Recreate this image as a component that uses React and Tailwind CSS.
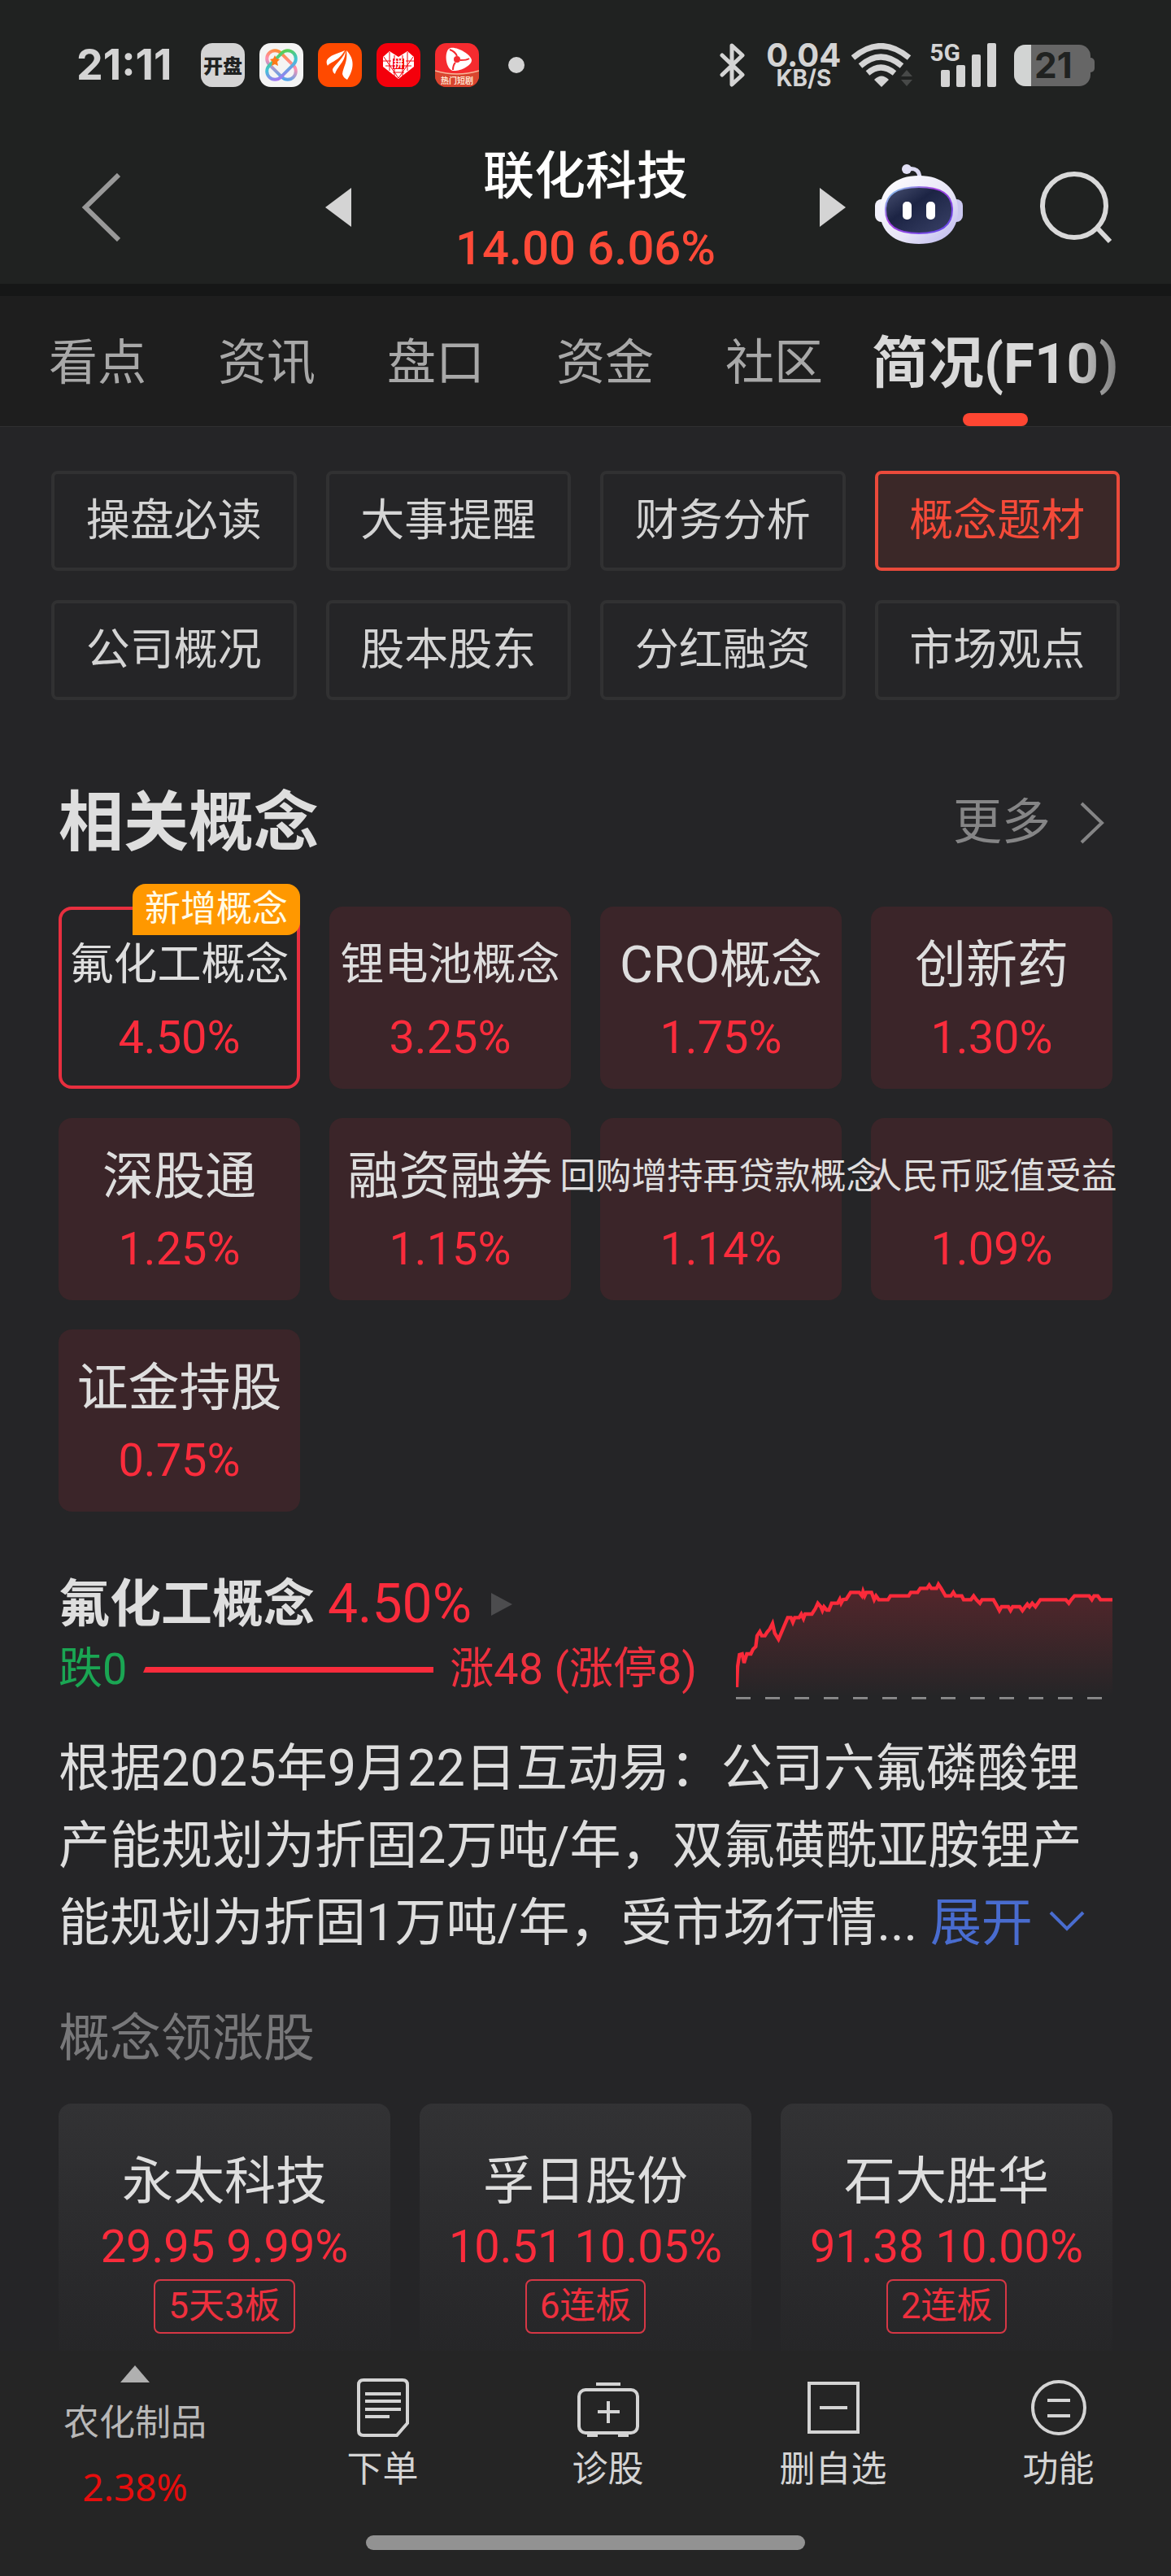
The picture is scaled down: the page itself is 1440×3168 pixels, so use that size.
import React, { useState } from 'react';

const tabs = ['看点', '资讯', '盘口', '资金', '社区'];

const sections = ['操盘必读', '大事提醒', '财务分析', '概念题材', '公司概况', '股本股东', '分红融资', '市场观点'];

const concepts = [
    { name: '氟化工概念', change: '4.50%', isNew: true },
    { name: '锂电池概念', change: '3.25%' },
    { name: 'CRO概念', change: '1.75%' },
    { name: '创新药', change: '1.30%' },
    { name: '深股通', change: '1.25%' },
    { name: '融资融券', change: '1.15%' },
    { name: '回购增持再贷款概念', change: '1.14%' },
    { name: '人民币贬值受益', change: '1.09%' },
    { name: '证金持股', change: '0.75%' },
];

const leaders = [
    { name: '永太科技', price: '29.95', change: '9.99%', tag: '5天3板' },
    { name: '孚日股份', price: '10.51', change: '10.05%', tag: '6连板' },
    { name: '石大胜华', price: '91.38', change: '10.00%', tag: '2连板' },
];

const trend =
    '78,525 81,450 88,405 98,402 105,435 115,402 130,402 138,385 148,375 153,335 163,320 170,335 182,335 190,322 200,310 210,290 218,325 232,348 266,268 278,268 285,285 292,268 308,268 316,255 324,272 330,255 355,255 368,235 377,215 388,228 394,242 400,228 410,240 418,240 428,215 450,215 458,200 463,215 470,202 482,200 498,175 530,175 540,188 544,172 550,188 556,175 575,175 585,202 592,188 602,202 636,202 645,188 712,188 720,175 745,175 755,160 780,160 788,148 796,160 815,160 822,145 832,160 848,188 868,188 877,175 885,188 908,188 915,202 942,202 952,188 962,202 975,215 983,202 1025,202 1038,225 1047,242 1055,228 1080,228 1088,242 1096,228 1122,228 1132,242 1142,228 1150,218 1158,228 1168,215 1180,228 1198,202 1292,202 1303,215 1312,202 1324,188 1378,188 1388,202 1396,188 1410,188 1420,202 1464,202';

// Longer names get a smaller size
const nameSize = (name) => {
    if (name.length > 5) return 'text-[44px]';
    if (name.length === 5 && !name.startsWith('CRO')) return 'text-[54px]';
    return 'text-[63px]';
};

const StatusBar = () => (
    <div className="flex h-40 items-center justify-between pl-[94px] pr-[94px] font-['Inter',sans-serif] text-[#d4d4d4]">
        <div className="flex items-center">
            <span className="w-[153px] text-[52px] font-bold leading-none">21:11</span>
            <div className="flex items-center gap-[18px]">
                <span className="flex h-[54px] w-[54px] items-center justify-center rounded-[14px] bg-[#d4d4d4] font-['Noto_Sans_CJK_SC',sans-serif] text-[24px] font-black leading-none text-[#202221]">
                    开盘
                </span>
                <svg viewBox="0 0 54 54" className="h-[54px] w-[54px]">
                    <defs>
                        <linearGradient id="knotA" x1="0" y1="0" x2="1" y2="1">
                            <stop offset="0" stopColor="#ff8a1f" />
                            <stop offset=".45" stopColor="#ff8fb0" />
                            <stop offset="1" stopColor="#35a7f5" />
                        </linearGradient>
                        <linearGradient id="knotB" x1="1" y1="0" x2="0" y2="1">
                            <stop offset="0" stopColor="#5ed13c" />
                            <stop offset=".5" stopColor="#3fc3d8" />
                            <stop offset="1" stopColor="#b06cf5" />
                        </linearGradient>
                    </defs>
                    <rect width="54" height="54" rx="14" fill="#f4f4f4" />
                    <rect x="6" y="17" width="42" height="20" rx="10" fill="none" stroke="url(#knotA)" strokeWidth="4" transform="rotate(45 27 27)" />
                    <rect x="6" y="17" width="42" height="20" rx="10" fill="none" stroke="url(#knotB)" strokeWidth="4" transform="rotate(-45 27 27)" />
                    <path d="M19 15l2 4 4 1-3 3 1 5-4-2-4 2 1-5-3-3 4-1z" fill="#ff7a1a" />
                </svg>
                <svg viewBox="0 0 54 54" className="h-[54px] w-[54px]">
                    <rect width="54" height="54" rx="14" fill="#ff4a00" />
                    <g fill="#fff">
                        <path d="M33 9C24 13 14 15 11 21c-1 3 0 5 1 7 3-5 14-6 21-19z" />
                        <path d="M34 9c-1 8-14 18-16 23 0 3 1 5 3 6 3-10 13-15 13-29z" />
                        <path d="M35 9c2 14-4 20-5 29 1 4 4 6 6 7 8-12 10-25-1-36z" />
                    </g>
                </svg>
                <svg viewBox="0 0 54 54" className="h-[54px] w-[54px]">
                    <rect width="54" height="54" rx="14" fill="#f4000b" />
                    <path d="M27 44L8 29V17l8-7 11 7 11-7 8 7v12z" fill="#fff" />
                    <path d="M8 22h10M36 22h10M16 11v23M38 11v23M9 17l18 26M45 17L27 43M22 15v7M32 15v7M11 28h9M34 28h9M20 36h14M22 32v9M32 32v9" stroke="#f4000b" strokeWidth="1" fill="none" />
                    <path d="M20 19h14v13H20z" fill="#f4000b" />
                    <text x="27" y="30" fontSize="12" fontWeight="700" fill="#fff" textAnchor="middle" className="font-['Noto_Sans_CJK_SC',sans-serif]">拼</text>
                </svg>
                <svg viewBox="0 0 54 54" className="h-[54px] w-[54px]">
                    <defs>
                        <clipPath id="dramaClip"><rect width="54" height="54" rx="14" /></clipPath>
                    </defs>
                    <g clipPath="url(#dramaClip)">
                        <rect width="54" height="54" fill="#f52b2f" />
                        <path d="M0 34q27 8 54 0v20H0z" fill="#d8452f" />
                        <path d="M0 34q27 8 54 0" fill="none" stroke="#f7b89a" strokeWidth="1.5" />
                        <path d="M17 7c6-5 27 6 28 14 0 7-15 14-23 13-9-2-11-22-5-27z" fill="#fff" />
                        <circle cx="27" cy="20" r="4" fill="#f52b2f" />
                        <path d="M27 16c-2-5-6-7-9-8M31 21c4 0 8 0 11-2M25 24c-3 3-3 6-3 9" stroke="#f52b2f" strokeWidth="2" fill="none" />
                        <text x="27" y="50" fontSize="10" fontWeight="700" fill="#ffe3cf" textAnchor="middle" className="font-['Noto_Sans_CJK_SC',sans-serif]">热门短剧</text>
                    </g>
                </svg>
            </div>
            <span className="ml-9 h-5 w-5 rounded-full bg-[#d4d4d4]" />
        </div>
        <div className="flex items-center">
            <svg viewBox="0 0 32 54" className="h-[54px] w-8" fill="none" stroke="#d4d4d4" strokeWidth="5" strokeLinejoin="round" strokeLinecap="round">
                <path d="M3 15l25 24-13 12V3l13 12L3 39" />
            </svg>
            <div className="ml-6 flex w-[94px] flex-col items-center font-bold">
                <span className="text-[40px] leading-8">0.04</span>
                <span className="text-[28px] leading-6">KB/S</span>
            </div>
            <svg viewBox="0 0 76 54" className="ml-3 h-[54px] w-[76px]">
                <g fill="none" stroke="#d4d4d4" strokeWidth="7">
                    <path d="M2 18Q36-11 71 18" />
                    <path d="M11 28Q36 6 62 28" />
                    <path d="M20 37Q36 23 53 37" />
                </g>
                <path d="M28 45q9-9 18 0l-9 9z" fill="#d4d4d4" />
                <path d="M61 41l7-8 7 8zM61 45h14l-7 8z" fill="#474948" />
            </svg>
            <div className="ml-5 flex h-[54px] items-end">
                <span className="-mr-6 self-start font-['Roboto',sans-serif] text-[30px] font-bold leading-6">5G</span>
                <svg viewBox="0 0 68 54" className="h-[54px] w-[68px]" fill="#d4d4d4">
                    <rect x="0" y="33" width="11" height="21" rx="2" />
                    <rect x="19" y="27" width="11" height="27" rx="2" />
                    <rect x="38" y="14" width="11" height="40" rx="2" />
                    <rect x="57" y="0" width="11" height="54" rx="2" />
                </svg>
            </div>
            <div className="ml-[22px] flex items-center">
                <div className="flex h-[51px] w-[94px] items-center overflow-hidden rounded-[14px] bg-[#666]">
                    <span className="h-full w-[21px] bg-[#d2d4d3]" />
                    <span className="ml-1 text-[44px] font-bold leading-none text-[#202221]">21</span>
                </div>
                <span className="h-[18px] w-[5px] rounded-r-full bg-[#666]" />
            </div>
        </div>
    </div>
);

const RobotIcon = () => (
    <svg viewBox="0 0 108 100" className="h-[100px] w-[108px]">
        <defs>
            <linearGradient id="shell" x1="0" y1="0" x2="1" y2="1">
                <stop offset="0" stopColor="#ffffff" />
                <stop offset=".6" stopColor="#e6e4f6" />
                <stop offset="1" stopColor="#b9b4ee" />
            </linearGradient>
            <linearGradient id="rim" x1="0" y1="0" x2="1" y2="1">
                <stop offset="0" stopColor="#7fe3f0" />
                <stop offset=".4" stopColor="#a43fe0" />
                <stop offset="1" stopColor="#5b4be8" />
            </linearGradient>
            <linearGradient id="visor" x1="0" y1="0" x2="1" y2="1">
                <stop offset="0" stopColor="#4a5273" />
                <stop offset=".4" stopColor="#1c2444" />
                <stop offset="1" stopColor="#3a4268" />
            </linearGradient>
        </defs>
        <path d="M40 7q15-3 15 12" fill="none" stroke="#dcdaf2" strokeWidth="5" />
        <circle cx="39" cy="7" r="6" fill="#e2e0f6" />
        <rect x="0" y="44" width="18" height="28" rx="8" fill="#f1f0fa" />
        <rect x="90" y="44" width="18" height="28" rx="8" fill="#cbc8f0" />
        <path d="M54 15C84 15 102 32 102 58S84 99 54 99 6 84 6 58 24 15 54 15z" fill="url(#shell)" />
        <path d="M54 29C82 29 95 38 95 57S82 86 54 86 13 76 13 57 26 29 54 29z" fill="url(#visor)" stroke="url(#rim)" strokeWidth="2" />
        <rect x="34" y="47" width="11" height="22" rx="5" fill="#fff" />
        <rect x="63" y="47" width="11" height="22" rx="5" fill="#fff" />
    </svg>
);

const StockHeader = () => (
    <header className="grid h-[189px] grid-cols-[1fr_640px_1fr] items-center">
        <button aria-label="返回" className="justify-self-start pl-[100px]">
            <svg viewBox="0 0 48 84" className="h-[84px] w-12" fill="none" stroke="#999" strokeWidth="6">
                <path d="M46 2L5 42l41 40" />
            </svg>
        </button>
        <div className="flex items-center justify-between">
            <button aria-label="上一只">
                <svg viewBox="0 0 32 48" className="h-12 w-8" fill="#d4d4d4"><path d="M32 0v48L0 24z" /></svg>
            </button>
            <div className="flex flex-col items-center pt-3">
                <h1 className="text-[63px] font-medium leading-[88px] text-white">联化科技</h1>
                <p className="text-[58px] font-medium leading-[88px] text-[#ff4a38]">14.00 6.06%</p>
            </div>
            <button aria-label="下一只">
                <svg viewBox="0 0 32 48" className="h-12 w-8" fill="#d4d4d4"><path d="M0 0v48l32-24z" /></svg>
            </button>
        </div>
        <div className="flex items-center justify-between pl-9 pr-[72px]">
            <button aria-label="智能助手" className="pb-2"><RobotIcon /></button>
            <button aria-label="搜索">
                <svg viewBox="0 0 90 90" className="h-[90px] w-[90px]" fill="none" stroke="#d9d9d9" strokeWidth="6">
                    <circle cx="43" cy="43" r="39" />
                    <path d="M71 70l16 17" />
                </svg>
            </button>
        </div>
    </header>
);

const TabBar = () => (
    <nav className="flex h-[161px] items-stretch border-b border-[#303030] bg-[#1e1e1e] pl-4">
        {tabs.map((tab) => (
            <button key={tab} className="px-11 pt-1.5 text-[60px] leading-none text-[#a8a8a8]">
                {tab}
            </button>
        ))}
        <button className="relative px-4 pt-1.5 text-[69px] font-bold leading-none whitespace-nowrap">
            <span className="bg-gradient-to-r from-[#d9d9d9] from-80% to-[#7c7c7c] bg-clip-text text-transparent">简况(F10)</span>
            <span className="absolute bottom-0 left-1/2 h-4 w-20 -translate-x-1/2 rounded-full bg-[#ff4632]" />
        </button>
    </nav>
);

const ConceptCard = ({ item, selected, onSelect }) => (
    <button
        onClick={onSelect}
        className={`relative flex h-56 min-w-0 flex-col items-center gap-[25px] rounded-2xl border-4 pt-9 ${selected ? 'border-[#e82f3f]' : 'border-transparent bg-[#ff283c]/10'}`}
    >
        <span className={`leading-[64px] whitespace-nowrap text-[#dedede] ${nameSize(item.name)}`}>{item.name}</span>
        <span className="text-[56px] leading-[64px] text-[#fa2c3c]">{item.change}</span>
        {item.isNew && (
            <span className="absolute -right-1 -top-8 rounded-2xl rounded-bl-none bg-[#ff9800] px-[15px] text-[44px] leading-[63px] text-[#fffbe8]">
                新增概念
            </span>
        )}
    </button>
);

const TrendChart = () => (
    <svg viewBox="75 93 1389 480" className="h-40 w-[463px] shrink-0">
        <defs>
            <linearGradient id="trendFill" x1="0" y1="0" x2="0" y2="1">
                <stop offset="0" stopColor="#ff2a3a" stopOpacity=".22" />
                <stop offset="1" stopColor="#ff2a3a" stopOpacity="0" />
            </linearGradient>
        </defs>
        <polygon points={`${trend} 1464,560 78,560`} fill="url(#trendFill)" />
        <polyline points={trend} fill="none" stroke="#fa2a3a" strokeWidth="13" />
        <path d="M75 565H1464" stroke="#8c8c8d" strokeWidth="8" strokeDasharray="54 54" />
    </svg>
);

const BottomNav = () => (
    <footer className="mt-auto bg-[#252525]">
        <nav className="flex h-[227px] text-[44px] text-[#d4d4d4]">
            <button className="flex w-[332px] flex-col items-center pt-[18px]">
                <svg viewBox="0 0 36 21" className="h-[21px] w-9" fill="#b0b0b0"><path d="M18 0l18 21H0z" /></svg>
                <span className="mt-2.5 leading-[80px] text-[#b8b8b8]">农化制品</span>
                <span className="font-['Noto_Sans',sans-serif] text-[46px] leading-[76px] text-[#e60d0d]">2.38%</span>
            </button>
            <button className="flex flex-1 flex-col items-center pt-[34px]">
                <svg viewBox="0 0 64 72" className="h-[72px] w-16" fill="none" stroke="#d4d4d4" strokeWidth="4">
                    <path d="M8 2h48q6 0 6 6v47L49 70H8q-6 0-6-6V8q0-6 6-6z" />
                    <path d="M10 19h44M10 28h44M10 38h44M10 47h30" />
                </svg>
                <span className="mt-2 leading-[64px]">下单</span>
            </button>
            <button className="flex flex-1 flex-col items-center pt-[34px]">
                <svg viewBox="0 0 76 72" className="h-[72px] w-[76px]" fill="none" stroke="#d4d4d4" strokeWidth="4">
                    <rect x="2" y="14" width="72" height="53" rx="8" />
                    <path d="M23 7h30M38 28v27M25 41h27M12 70h13M50 70h13" />
                </svg>
                <span className="mt-2 leading-[64px]">诊股</span>
            </button>
            <button className="flex flex-1 flex-col items-center pt-[34px]">
                <svg viewBox="0 0 64 72" className="h-[72px] w-16" fill="none" stroke="#d4d4d4" strokeWidth="4">
                    <path d="M2 6h60v60H2zM15 36h34" />
                </svg>
                <span className="mt-2 leading-[64px]">删自选</span>
            </button>
            <button className="flex flex-1 flex-col items-center pt-[34px]">
                <svg viewBox="0 0 68 72" className="h-[72px] w-[68px]" fill="none" stroke="#d4d4d4" strokeWidth="4">
                    <circle cx="34" cy="36" r="32" />
                    <path d="M20 27h28M20 46h28" />
                </svg>
                <span className="mt-2 leading-[64px]">功能</span>
            </button>
        </nav>
        <div className="flex h-[50px] justify-center">
            <span className="h-[18px] w-[540px] rounded-full bg-[#929292]" />
        </div>
    </footer>
);

const App = () => {
    const [section, setSection] = useState('概念题材');
    const [concept, setConcept] = useState('氟化工概念');

    return (
        <div className="flex min-h-screen flex-col overflow-x-hidden bg-[#252527] font-['Roboto','Noto_Sans_CJK_SC',sans-serif] text-[#dedede]">
            <div className="border-b-[15px] border-[#161717] bg-[#202221]">
                <StatusBar />
                <StockHeader />
            </div>
            <TabBar />

            <div className="grid grid-cols-4 gap-9 px-[63px] pt-[54px]">
                {sections.map((s) => (
                    <button
                        key={s}
                        onClick={() => setSection(s)}
                        className={`h-[123px] rounded-lg border-4 text-[54px] leading-none ${section === s
                            ? 'border-[#eb4a3b] bg-[#3b2828] text-[#f54a39]'
                            : 'border-[#313132] text-[#d4d4d4]'
                            }`}
                    >
                        {s}
                    </button>
                ))}
            </div>

            <main className="px-[72px]">
                {/* Related concepts */}
                <div className="mt-[103px] flex items-center justify-between">
                    <h2 className="text-[80px] font-bold leading-[96px]">相关概念</h2>
                    <a href="#more" className="flex items-center gap-9 pr-2.5 text-[60px] leading-[96px] text-[#858586]">
                        更多
                        <svg viewBox="0 0 30 52" className="h-[52px] w-[30px]" fill="none" stroke="#858586" strokeWidth="4">
                            <path d="M2 2l25 24L2 50" />
                        </svg>
                    </a>
                </div>
                <div className="mt-[55px] grid grid-cols-4 gap-9">
                    {concepts.map((item) => (
                        <ConceptCard key={item.name} item={item} selected={concept === item.name} onSelect={() => setConcept(item.name)} />
                    ))}
                </div>

                {/* Selected concept */}
                <section className="mt-[72px]">
                    <div className="flex justify-between">
                        <div>
                            <div className="flex items-center leading-[84px]">
                                <h3 className="text-[63px] font-bold">氟化工概念</h3>
                                <span className="ml-4 text-[66px]  text-[#fa2c3c]">4.50%</span>
                                <svg viewBox="0 0 26 28" className="ml-6 h-7 w-[26px]" fill="#4c4c4e"><path d="M0 0l26 14L0 28z" /></svg>
                            </div>
                            <div className="flex items-center text-[54px] leading-[76px] whitespace-nowrap">
                                <span className="text-[#1aa653]">跌0</span>
                                <svg viewBox="0 0 357 7" className="mx-5 h-[7px] w-[357px]" fill="#fa2c3c"><path d="M3 0h354v7H0z" /></svg>
                                <span className="text-[#ee303e]">涨48 (涨停8)</span>
                            </div>
                        </div>
                        <TrendChart />
                    </div>
                    <p className="mt-9 text-[63px] leading-[95px]">
                        根据2025年9月22日互动易：公司六氟磷酸锂产能规划为折固2万吨/年，双氟磺酰亚胺锂产能规划为折固1万吨/年，受市场行情...{' '}
                        <button className="whitespace-nowrap text-[#496ccf]">
                            展开
                            <svg viewBox="0 0 44 26" className="mb-3 ml-5 inline-block h-[26px] w-11 align-middle" fill="none" stroke="#496ccf" strokeWidth="4">
                                <path d="M2 2l20 20L42 2" />
                            </svg>
                        </button>
                    </p>
                </section>

                {/* Leading stocks */}
                <h4 className="mt-[55px] text-[63px] leading-[80px] text-[#78787a]">概念领涨股</h4>
                <div className="mt-10 grid grid-cols-3 gap-9">
                    {leaders.map((stock) => (
                        <a
                            key={stock.name}
                            href="#stock"
                            className="flex h-[304px] flex-col items-center rounded-t-2xl bg-gradient-to-b from-[#323234] to-[#262628] pt-14"
                        >
                            <span className="text-[63px] leading-[80px]">{stock.name}</span>
                            <span className="text-[56px] leading-[80px] text-[#fa2c3c]">{stock.price} {stock.change}</span>
                            <span className="rounded-lg border-2 border-[#d63745] px-4 text-[44px] leading-[63px] text-[#ee303e]">{stock.tag}</span>
                        </a>
                    ))}
                </div>
            </main>

            <BottomNav />
        </div>
    );
};

export default App;
